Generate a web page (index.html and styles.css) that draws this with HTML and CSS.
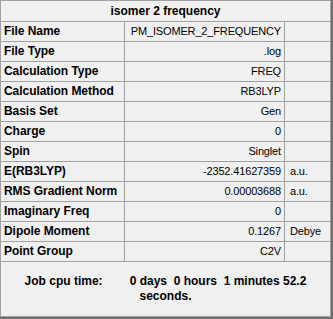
FILE: index.html
```html
<!DOCTYPE html>
<html lang="en">
<head>
    <meta charset="UTF-8">
    <title>isomer 2 frequency</title>
    <link rel="stylesheet" href="styles.css">
</head>
<body>
    <div class="panel">
        <div class="summary">
            <div class="title">isomer 2 frequency</div>

            <div class="label">File Name</div>
            <div class="value">PM_ISOMER_2_FREQUENCY</div>
            <div class="unit"></div>

            <div class="label">File Type</div>
            <div class="value">.log</div>
            <div class="unit"></div>

            <div class="label">Calculation Type</div>
            <div class="value">FREQ</div>
            <div class="unit"></div>

            <div class="label">Calculation Method</div>
            <div class="value">RB3LYP</div>
            <div class="unit"></div>

            <div class="label">Basis Set</div>
            <div class="value">Gen</div>
            <div class="unit"></div>

            <div class="label">Charge</div>
            <div class="value">0</div>
            <div class="unit"></div>

            <div class="label">Spin</div>
            <div class="value">Singlet</div>
            <div class="unit"></div>

            <div class="label">E(RB3LYP)</div>
            <div class="value">-2352.41627359</div>
            <div class="unit">a.u.</div>

            <div class="label">RMS Gradient Norm</div>
            <div class="value">0.00003688</div>
            <div class="unit">a.u.</div>

            <div class="label">Imaginary Freq</div>
            <div class="value">0</div>
            <div class="unit"></div>

            <div class="label">Dipole Moment</div>
            <div class="value">0.1267</div>
            <div class="unit">Debye</div>

            <div class="label">Point Group</div>
            <div class="value">C2V</div>
            <div class="unit"></div>
        </div>

        <div class="cpu-time"><span class="cpu-label">Job cpu time:</span>0 days  0 hours  1 minutes 52.2<br>seconds.</div>
    </div>
</body>
</html>
```

FILE: styles.css
```css
/* Window */
body {
    margin: 0;
    width: 333px;
    height: 319px;
    background-color: #6f6f6f;
    font-family: "Liberation Sans", Arial, sans-serif;
    color: #000;
}

.panel {
    width: 329px;
    height: 315px;
    border: 1px solid #a0a0a0;
    background-color: #f0f0f0;
    display: flex;
    flex-direction: column;
}

/* Summary grid: the 1px gaps show through as grid lines */
.summary {
    display: grid;
    grid-template-columns: 123px 159px 45px;
    grid-template-rows: 20px;
    grid-auto-rows: 19px;
    gap: 1px;
    background-color: #a0a0a0;
    border-bottom: 1px solid #a0a0a0;
}

.summary > div {
    background-color: #f0f0f0;
    line-height: 19px;
    white-space: nowrap;
    overflow: hidden;
}

.title {
    grid-column: 1 / -1;
    text-align: center;
    font-weight: bold;
    font-size: 12px;
    line-height: 20px !important;
}

.label {
    padding-left: 3px;
    font-weight: bold;
    font-size: 12px;
    letter-spacing: -0.05px;
}

.value {
    padding-right: 3px;
    text-align: right;
    font-size: 11px;
    letter-spacing: -0.15px;
}

.unit {
    padding-left: 5px;
    font-size: 11px;
    letter-spacing: -0.15px;
}

/* Footer line */
.cpu-time {
    flex: 1;
    padding-top: 12px;
    text-align: center;
    font-weight: bold;
    font-size: 12px;
    line-height: 15px;
    white-space: pre;
}

.cpu-label {
    margin-right: 27px;
}
```
